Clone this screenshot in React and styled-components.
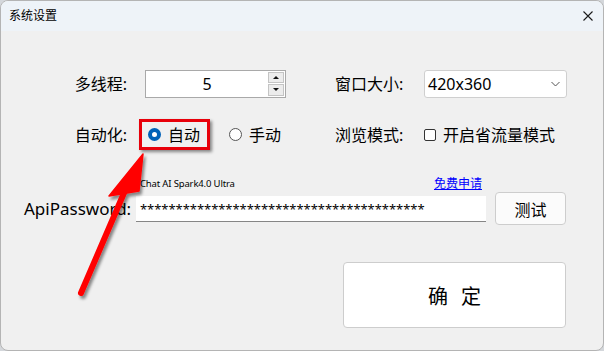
import React from "react";
import styled, { createGlobalStyle } from "styled-components";

const GlobalStyle = createGlobalStyle`
  html, body {
    margin: 0;
    padding: 0;
    background: #d4d7db;
  }
  body {
    font-family: "Noto Sans", "Noto Sans CJK SC", sans-serif;
    color: #000;
  }
`;

const Window = styled.div`
  position: relative;
  width: 604px;
  height: 351px;
  box-sizing: border-box;
  border: 1px solid #b4b4b4;
  border-radius: 8px;
  overflow: hidden;
  background: #f0f0f0;
  display: flex;
  flex-direction: column;
`;

const TitleBar = styled.div`
  height: 30px;
  flex: none;
  background: #eef3f8;
  display: flex;
  align-items: center;
  justify-content: space-between;
  padding: 0 10px 0 8px;
  font-size: 12px;
  line-height: 1;
`;

const CloseIcon = () => (
  <svg width="10" height="10" viewBox="0 0 10 10">
    <path d="M0.5 0.5 L9.5 9.5 M9.5 0.5 L0.5 9.5" stroke="#1a1a1a" strokeWidth="1.1" />
  </svg>
);

const Body = styled.div`
  flex: 1;
  display: flex;
  flex-direction: column;
`;

const Row = styled.div`
  display: flex;
  align-items: center;
  height: ${(p) => p.h}px;
  margin-top: ${(p) => p.mt}px;
`;

const Label = styled.div`
  flex: none;
  width: ${(p) => p.w}px;
  margin-left: ${(p) => p.ml || 0}px;
  text-align: ${(p) => (p.right ? "right" : "left")};
  font-size: 16px;
  line-height: 20px;
  white-space: nowrap;
`;

const SpinBox = styled.div`
  flex: none;
  margin-left: 18px;
  width: 141px;
  height: 28px;
  box-sizing: border-box;
  border: 1px solid #a9a9a9;
  background: #fff;
  display: flex;
  align-items: center;
  padding: 1px 1px 1px 0;
`;

const SpinValue = styled.div`
  flex: 1;
  text-align: center;
  font-size: 16px;
  line-height: 20px;
`;

const SpinButtons = styled.div`
  width: 16px;
  height: 100%;
  display: flex;
  flex-direction: column;
  gap: 1px;
`;

const SpinButton = styled.div`
  flex: 1;
  background: #ececec;
  border: 1px solid #c4c4c4;
  display: flex;
  align-items: center;
  justify-content: center;
  &::after {
    content: "";
    border-left: 3px solid transparent;
    border-right: 3px solid transparent;
    ${(p) => (p.up ? "border-bottom: 3px solid #111;" : "border-top: 3px solid #111;")}
  }
`;

const Select = styled.div`
  flex: none;
  margin-left: 21px;
  width: 143px;
  height: 28px;
  box-sizing: border-box;
  border: 1px solid #cfcfcf;
  border-radius: 3px;
  background: #fff;
  display: flex;
  align-items: center;
  justify-content: space-between;
  padding: 0 6px 0 3px;
  font-size: 16px;
  line-height: 20px;
`;

const Chevron = () => (
  <svg width="9" height="6" viewBox="0 0 9 6">
    <path d="M0.5 1 L4.5 5 L8.5 1" fill="none" stroke="#555" strokeWidth="1" />
  </svg>
);

const Cell = styled.div`
  flex: none;
  width: ${(p) => p.w}px;
  display: flex;
  align-items: center;
`;

const HighlightBox = styled.div`
  margin-left: 12px;
  width: 71px;
  height: 31px;
  box-sizing: border-box;
  border: 3px solid #e8000a;
  box-shadow: 2px 2px 3px rgba(0, 0, 0, 0.45);
  display: flex;
  align-items: center;
  padding-left: 6px;
`;

const Option = styled.label`
  display: flex;
  align-items: center;
  gap: 7px;
  margin-left: ${(p) => p.ml || 0}px;
  font-size: 16px;
  line-height: 20px;
`;

const Radio = styled.span`
  width: 13px;
  height: 13px;
  box-sizing: border-box;
  border-radius: 50%;
  flex: none;
  border: ${(p) => (p.checked ? "4px solid #0062b8" : "1px solid #555")};
  background: #fff;
`;

const Check = styled.span`
  width: 12px;
  height: 12px;
  box-sizing: border-box;
  border: 1px solid #333;
  border-radius: 2px;
  background: #fff;
  flex: none;
`;

const ApiGrid = styled.div`
  display: grid;
  grid-template-columns: 112px 350px 80px;
  grid-template-rows: 12px 33px;
  row-gap: 2px;
  margin-top: 28px;
  padding-left: 23px;
`;

const Hint = styled.div`
  grid-column: 2;
  display: flex;
  justify-content: space-between;
  align-items: center;
  padding: 0 4px;
`;

const ModelName = styled.span`
  font-size: 9.5px;
  line-height: 12px;
  letter-spacing: -0.15px;
`;

const Link = styled.a`
  font-size: 12px;
  line-height: 12px;
  color: #0000ff;
  text-decoration: underline;
`;

const ApiLabel = styled.div`
  grid-column: 1;
  align-self: center;
  font-size: 17px;
  line-height: 20px;
`;

const PasswordInput = styled.div`
  align-self: center;
  height: 26px;
  box-sizing: border-box;
  background: #fff;
  border-bottom: 1px solid #868686;
  padding-left: 4px;
  font-size: 13px;
  line-height: 26px;
  letter-spacing: -0.05px;
  overflow: hidden;
  white-space: nowrap;
`;

const Button = styled.button`
  box-sizing: border-box;
  background: ${(p) => (p.primary ? "#fff" : "#fbfbfb")};
  border: 1px solid #cdcdcd;
  border-radius: 4px;
  font-family: "Noto Sans", "Noto Sans CJK SC", sans-serif;
  color: #000;
  padding: 0;
`;

const TestButton = styled(Button)`
  margin-left: 9px;
  width: 71px;
  height: 33px;
  font-size: 16px;
`;

const Footer = styled.div`
  display: flex;
  justify-content: flex-end;
  margin-top: 37px;
  padding-right: 37px;
`;

const ConfirmButton = styled(Button)`
  width: 223px;
  height: 66px;
  font-size: 20px;
  word-spacing: 8px;
`;

const Overlay = styled.svg`
  position: absolute;
  left: -1px;
  top: -1px;
  pointer-events: none;
`;

const Arrow = () => (
  <Overlay width="604" height="351" viewBox="0 0 604 351">
    <defs>
      <filter id="sh" x="-50%" y="-50%" width="200%" height="200%">
        <feDropShadow dx="2" dy="3" stdDeviation="1.6" floodColor="#000" floodOpacity="0.45" />
      </filter>
    </defs>
    <g filter="url(#sh)" fill="#ff0000" stroke="#ff0000">
      <line x1="81" y1="293" x2="127" y2="186" strokeWidth="6" strokeLinecap="round" />
      <polygon points="143,154 109,196 139,191" strokeWidth="1.5" strokeLinejoin="round" />
    </g>
  </Overlay>
);

export default function App() {
  return (
    <>
      <GlobalStyle />
      <Window>
        <TitleBar>
          <span>系统设置</span>
          <CloseIcon />
        </TitleBar>
        <Body>
          <Row h={29} mt={38}>
            <Label w={126} right>多线程:</Label>
            <SpinBox>
              <SpinValue>5</SpinValue>
              <SpinButtons>
                <SpinButton up />
                <SpinButton />
              </SpinButtons>
            </SpinBox>
            <Label w={68} ml={49}>窗口大小:</Label>
            <Select>
              <span>420x360</span>
              <Chevron />
            </Select>
          </Row>
          <Row h={31} mt={21}>
            <Label w={126} right>自动化:</Label>
            <Cell w={159}>
              <HighlightBox>
                <Option>
                  <Radio checked />
                  自动
                </Option>
              </HighlightBox>
              <Option ml={19}>
                <Radio />
                手动
              </Option>
            </Cell>
            <Label w={68} ml={49}>浏览模式:</Label>
            <Option ml={21}>
              <Check />
              开启省流量模式
            </Option>
          </Row>
          <ApiGrid>
            <Hint>
              <ModelName>Chat AI Spark4.0 Ultra</ModelName>
              <Link>免费申请</Link>
            </Hint>
            <ApiLabel>ApiPassword:</ApiLabel>
            <PasswordInput>{"*".repeat(40)}</PasswordInput>
            <TestButton>测试</TestButton>
          </ApiGrid>
          <Footer>
            <ConfirmButton primary>确 定</ConfirmButton>
          </Footer>
        </Body>
        <Arrow />
      </Window>
    </>
  );
}
